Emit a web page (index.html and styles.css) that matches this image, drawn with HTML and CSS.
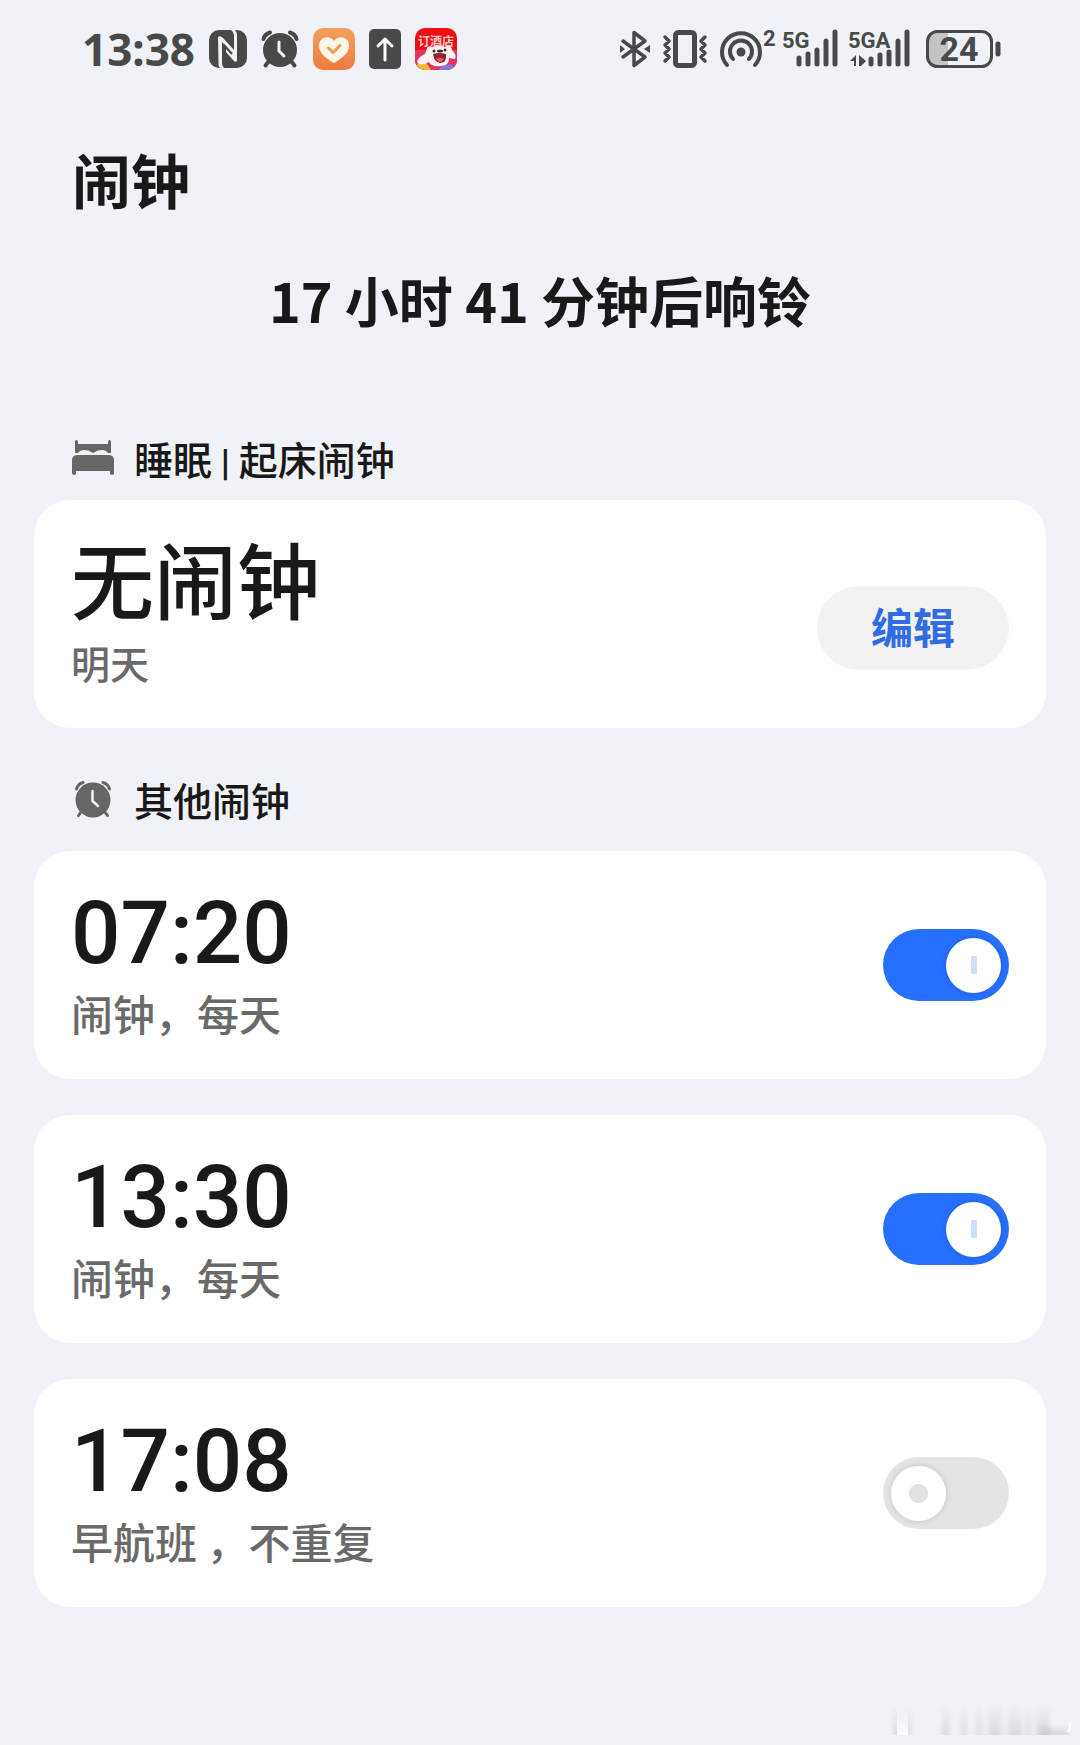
FILE: index.html
```html
<!DOCTYPE html>
<html lang="zh-CN">
<head>
  <meta charset="utf-8">
  <meta name="viewport" content="width=device-width, initial-scale=1">
  <title>闹钟</title>
  <link rel="stylesheet" href="styles.css">
</head>

<body>
  <header class="status">
    <div class="status-group status-left">
      <span class="clock">13:38</span>
      <!-- NFC -->
      <svg class="icon" width="38" height="38" viewBox="0 0 38 38">
        <rect x="0" y="0" width="38" height="38" rx="10" fill="#484a49"/>
        <path d="M9 7Q11 5 14 8L25 20V5Q25 2 22 0H26Q28 2 28 5V31Q26 33 24 30L17 22V16L13 12V33Q13 36 15 38H11Q9 36 9.500 33Z" fill="#f1f2f7"/>
        <path d="M15 15L23 24" stroke="#484a49" stroke-width="2"/>
      </svg>
      <!-- alarm -->
      <svg class="icon" width="38" height="38" viewBox="0 0 38 38">
        <g fill="none" stroke="#484a49" stroke-width="4" stroke-linecap="round">
          <path d="M2.500 9Q4 4 9 2.500M35.500 9Q34 4 29 2.500M8 31L4.500 35.500M30 31L33.500 35.500"/>
        </g>
        <circle cx="19" cy="20" r="17" fill="#484a49"/>
        <path d="M18 12V21L23 26" fill="none" stroke="#f1f2f7" stroke-width="3" stroke-linecap="round"/>
      </svg>
      <!-- health -->
      <svg class="icon" width="42" height="42" viewBox="0 0 42 42">
        <defs>
          <linearGradient id="orange" x1="0" y1="0" x2="0" y2="1">
            <stop offset="0" stop-color="#f3a05c"/>
            <stop offset="1" stop-color="#f07a40"/>
          </linearGradient>
        </defs>
        <rect width="42" height="42" rx="10" fill="url(#orange)"/>
        <path d="M21 13C17 7 6 8 6 18C6 26 15 31 19 34Q21 35.500 23 34C27 31 36 26 36 18C36 8 25 7 21 13Z" fill="#fff6e6"/>
        <path d="M15.500 20L20 24.500L27 17.500" fill="none" stroke="#ee9a58" stroke-width="3" stroke-linecap="round" stroke-linejoin="round"/>
      </svg>
      <!-- upload -->
      <svg class="icon" width="32" height="40" viewBox="0 0 32 40">
        <rect width="32" height="40" rx="5" fill="#484a49"/>
        <path d="M16 31V10M9 17L16 10L23 17" fill="none" stroke="#fff" stroke-width="3" stroke-linecap="round" stroke-linejoin="round"/>
      </svg>
      <!-- hotel app -->
      <svg class="icon" width="42" height="42" viewBox="0 0 42 42">
        <defs>
          <clipPath id="app"><rect width="42" height="42" rx="10"/></clipPath>
        </defs>
        <g clip-path="url(#app)">
          <rect width="42" height="42" fill="#f20d12"/>
          <path d="M0 22H42V42H0Z" fill="#e23562"/>
          <path d="M3 35L12 36L16 42H0Z" fill="#f7b733"/>
          <path d="M26 38L36 36L42 42H24Z" fill="#8a75d8"/>
          <path d="M12 20Q13 17 17 19Q24 15 30 19Q36 15 37 22Q42 27 40 31L34 30Q34 38 26 38Q16 39 14 34Q6 39 2 34Q3 29 10 26Z" fill="#fff3f0"/>
          <path d="M18 26Q24 24 31 26Q32 35 25 35Q19 34 18 26Z" fill="#8e2630"/>
          <path d="M21 31Q25 28 29 31Q27 35 24 34Z" fill="#ee5560"/>
          <circle cx="19" cy="23" r="1.500" fill="#333"/>
          <circle cx="30" cy="22" r="1.500" fill="#333"/>
          <ellipse cx="25" cy="23" rx="3" ry="1.500" fill="#333"/>
        </g>
        <text class="app-text" x="21" y="18" text-anchor="middle">订酒店</text>
      </svg>
    </div>

    <div class="status-group status-right">
      <!-- bluetooth -->
      <svg class="icon" width="36" height="38" viewBox="0 0 36 38">
        <path d="M3 11L25 27L14 35.500V2.500L25 11L3 27" fill="none" stroke="#484a49" stroke-width="3.500" stroke-linejoin="round" stroke-linecap="round"/>
        <path d="M0 15L5 19L0 23ZM30 15L24 19L30 23Z" fill="#484a49"/>
      </svg>
      <!-- vibrate -->
      <svg class="icon" width="52" height="38" viewBox="0 0 52 38">
        <rect x="13.500" y="2.500" width="19" height="33" rx="3" fill="none" stroke="#484a49" stroke-width="5"/>
        <path d="M3 7L7 11L3 15L7 19L3 23L7 27L3 31M43 7L39 11L43 15L39 19L43 23L39 27L43 31" fill="none" stroke="#484a49" stroke-width="3.500" stroke-linejoin="round" stroke-linecap="round"/>
      </svg>
      <!-- hotspot -->
      <svg class="icon" width="56" height="42" viewBox="0 0 56 42">
        <g fill="none" stroke="#484a49" stroke-width="4" stroke-linecap="round">
          <path d="M7 37A19 19 0 1 1 35 37"/>
          <path d="M13 31A11 11 0 1 1 29 31"/>
        </g>
        <circle cx="21" cy="24" r="4.500" fill="#484a49"/>
        <text class="net-text" x="43" y="18">2</text>
      </svg>
      <!-- signal 1 -->
      <svg class="icon" width="60" height="42" viewBox="0 0 60 42">
        <text class="net-text" x="0" y="20">5G</text>
        <path d="M17 30V36M26 26V36M35 22V36M44 13V36M53 4V36" stroke="#484a49" stroke-width="5" stroke-linecap="round"/>
      </svg>
      <!-- signal 2 -->
      <svg class="icon" width="72" height="42" viewBox="0 0 72 42">
        <text class="net-text" x="0" y="20">5GA</text>
        <path d="M8 27V38H6V33H2ZM11 27V38H13L18 33Z" fill="#484a49"/>
        <path d="M23 31V36M32 27V36M41 24V36M50 13V36M59 4V36" stroke="#484a49" stroke-width="5" stroke-linecap="round"/>
      </svg>
      <!-- battery -->
      <svg class="icon" width="76" height="38" viewBox="0 0 76 38">
        <path d="M12 2H22V36H12Q2 36 2 26V12Q2 2 12 2Z" fill="#c3c4c6"/>
        <rect x="1.500" y="1.500" width="64" height="35" rx="10" fill="none" stroke="#484a49" stroke-width="3"/>
        <path d="M72 14V24" stroke="#484a49" stroke-width="5" stroke-linecap="round"/>
        <text class="battery-text" x="33" y="31" text-anchor="middle">24</text>
      </svg>
    </div>
  </header>

  <main class="page">
    <h1 class="title">闹钟</h1>
    <p class="next">17 小时 41 分钟后响铃</p>

    <section>
      <h2 class="section-title">
        <svg class="icon" width="42" height="36" viewBox="0 0 42 36">
          <path d="M3 2Q3 0 4.500 0Q6 0 6 2V4H36V2Q36 0 37.500 0Q39 0 39 2V13H36Q34 10 30 10Q25 10 23 12L21 13L19 12Q17 10 12 10Q8 10 6 13H3Z" fill="#666"/>
          <path d="M6 15H36Q42 15 42 20V33Q42 35 40 35Q38 35 38 33V31H4V33Q4 35 2 35Q0 35 0 33V20Q0 15 6 15Z" fill="#666"/>
        </svg>
        <span>睡眠 <span class="bar">|</span> 起床闹钟</span>
      </h2>
      <div class="card">
        <div class="info">
          <div class="none">无闹钟</div>
          <div class="day">明天</div>
        </div>
        <button class="edit" type="button">编辑</button>
      </div>
    </section>

    <section class="others">
      <h2 class="section-title">
        <svg class="icon" width="42" height="38" viewBox="-2 0 42 38">
          <g fill="none" stroke="#666" stroke-width="3" stroke-linecap="round">
            <path d="M2.500 9Q4 4 9 2.500M35.500 9Q34 4 29 2.500M7 32L4.500 35.500M31 32L33.500 35.500"/>
          </g>
          <circle cx="19" cy="20" r="17.500" fill="#666"/>
          <path d="M18.500 11V21L24 26" fill="none" stroke="#f1f2f7" stroke-width="2.500" stroke-linecap="round"/>
        </svg>
        <span>其他闹钟</span>
      </h2>
      <div class="list">
        <div class="card">
          <label class="info" for="alarm1">
            <span class="time">07:20</span>
            <span class="repeat">闹钟，每天</span>
          </label>
          <input class="switch" id="alarm1" type="checkbox" checked>
        </div>
        <div class="card">
          <label class="info" for="alarm2">
            <span class="time">13:30</span>
            <span class="repeat">闹钟，每天</span>
          </label>
          <input class="switch" id="alarm2" type="checkbox" checked>
        </div>
        <div class="card">
          <label class="info" for="alarm3">
            <span class="time">17:08</span>
            <span class="repeat">早航班 ，不重复</span>
          </label>
          <input class="switch" id="alarm3" type="checkbox">
        </div>
      </div>
    </section>
  </main>

  <!-- faded mark in the corner -->
  <svg class="mark" width="184" height="38" viewBox="0 0 184 38">
    <defs>
      <linearGradient id="fade" x1="0" y1="0" x2="0" y2="1">
        <stop offset="0" stop-color="#b5b6ba" stop-opacity="0"/>
        <stop offset="1" stop-color="#b5b6ba" stop-opacity=".4"/>
      </linearGradient>
      <linearGradient id="fadeWhite" x1="0" y1="0" x2="0" y2="1">
        <stop offset="0" stop-color="#fff" stop-opacity="0"/>
        <stop offset="1" stop-color="#fff"/>
      </linearGradient>
      <filter id="soft"><feGaussianBlur stdDeviation="2.500 0.500"/></filter>
    </defs>
    <g fill="url(#fade)" filter="url(#soft)">
      <rect x="3" y="4" width="18" height="32"/>
      <rect x="52" y="4" width="8" height="32"/>
      <rect x="71" y="4" width="6" height="32"/>
      <rect x="86" y="4" width="6" height="32"/>
      <rect x="98" y="4" width="14" height="32"/>
      <rect x="118" y="4" width="14" height="32"/>
      <rect x="136" y="4" width="5" height="32"/>
      <rect x="146" y="4" width="14" height="32"/>
      <rect x="150" y="24" width="28" height="12"/>
    </g>
    <rect x="7" y="4" width="11" height="32" fill="url(#fadeWhite)"/>
    <path d="M180 24V30Q180 32 177 32" fill="none" stroke="#fff" stroke-width="2"/>
  </svg>
</body>
</html>
```

FILE: styles.css
```css
* {
  box-sizing: border-box;
}

body {
  margin: 0;
  position: relative;
  min-height: 100vh;
  background: #f1f2f7;
  color: #191919;
  font-family: "Noto Sans CJK SC", sans-serif;
}

.icon {
  display: block;
  flex: none;
  overflow: visible;
}

/* status bar */
.status {
  display: flex;
  justify-content: space-between;
  align-items: center;
  height: 74px;
  padding: 24px 78px 0 82px;
}
.status-group {
  display: flex;
  align-items: center;
}
.status-left {
  gap: 14px;
}
.status-right {
  gap: 6px;
}
.clock {
  color: #484a49;
  font: bold 44px/50px "Noto Sans", sans-serif;
}
.net-text {
  fill: #484a49;
  font: bold 22px Roboto, sans-serif;
}
.battery-text {
  fill: #484a49;
  font: bold 34px Roboto, sans-serif;
}
.app-text {
  fill: #ffc9c4;
  font: bold 12px "Noto Sans CJK SC", sans-serif;
}

/* page */
.page {
  padding: 73px 34px 36px;
}
.title {
  margin: 0;
  padding: 0 38px;
  font-size: 59px;
  line-height: 64px;
  font-weight: bold;
}
.next {
  margin: 59px 0 108px;
  font-size: 54px;
  line-height: 60px;
  font-weight: bold;
  text-align: center;
}
.section-title {
  display: flex;
  align-items: center;
  gap: 20px;
  margin: 0 0 22px;
  padding: 0 38px;
  font-size: 39px;
  line-height: 40px;
  font-weight: 500;
}
.bar {
  font: bold 36px/30px Roboto, sans-serif;
}
.others {
  margin-top: 51px;
}
.others .section-title {
  margin-bottom: 32px;
}

/* cards */
.list {
  display: flex;
  flex-direction: column;
  gap: 36px;
}
.card {
  display: flex;
  justify-content: space-between;
  align-items: center;
  padding: 27px 37px 41px;
  border-radius: 36px;
  background: #fff;
}
.info {
  display: flex;
  flex-direction: column;
}
.none {
  font-size: 83px;
  line-height: 100px;
  font-weight: 500;
  margin-bottom: 10px;
}
.time {
  font: 500 87px/110px Roboto, sans-serif;
}
.day,
.repeat {
  color: #6a6a6a;
  font-size: 42px;
  line-height: 50px;
  font-weight: 500;
}
.day {
  font-size: 39px;
}

.edit {
  width: 192px;
  height: 84px;
  margin-top: 42px;
  padding: 0 0 4px;
  border: 0;
  border-radius: 42px;
  background: #f2f2f2;
  color: #2f6ce6;
  font: bold 42px/60px "Noto Sans CJK SC", sans-serif;
}

/* on/off switch */
.switch {
  appearance: none;
  display: flex;
  align-items: center;
  width: 126px;
  height: 72px;
  margin: 14px 0 0;
  padding: 0 8px;
  border-radius: 36px;
  background: #e4e4e4;
}
.switch::before {
  content: "";
  width: 55px;
  height: 55px;
  border-radius: 50%;
  background: radial-gradient(circle, #e2e2e2 9px, #fff 10px);
  box-shadow: 0 0 6px rgba(0, 0, 0, .15);
}
.switch:checked {
  justify-content: flex-end;
  background: #276fff;
}
.switch:checked::before {
  background: linear-gradient(#cfe0f8, #cfe0f8) center / 6px 18px no-repeat #fff;
}

.mark {
  position: absolute;
  right: 6px;
  bottom: 8px;
}
```
